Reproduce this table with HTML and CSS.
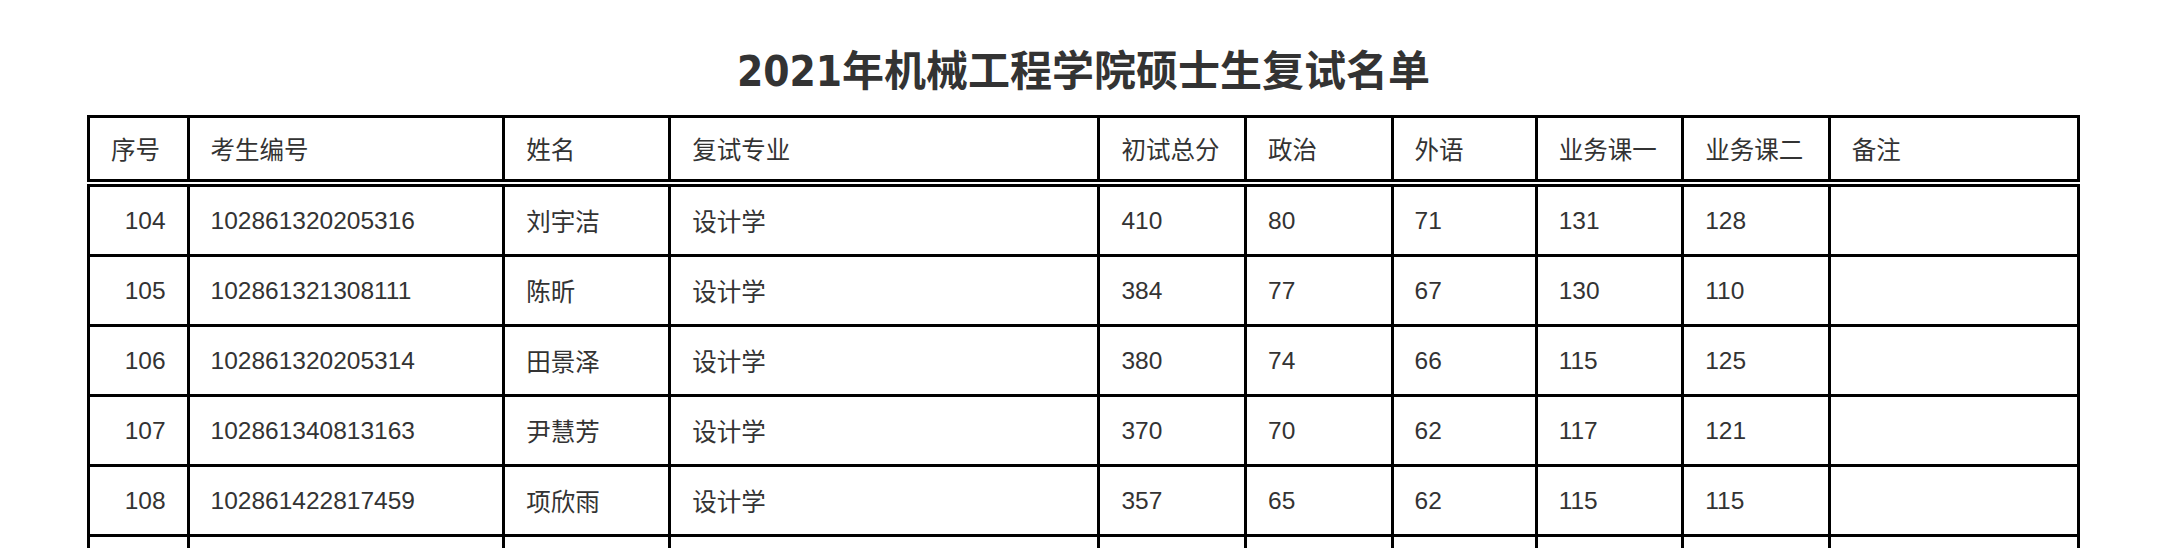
FILE: index.html
```html
<!DOCTYPE html>
<html lang="zh-CN">
<head>
<meta charset="utf-8">
<title>2021年机械工程学院硕士生复试名单</title>
<link rel="stylesheet" href="styles.css">
</head>
<body>
<div class="page">
  <h1 class="title">2021年机械工程学院硕士生复试名单</h1>
  <table class="roster">
    <colgroup>
      <col class="c-no">
      <col class="c-id">
      <col class="c-name">
      <col class="c-major">
      <col class="c-score">
      <col class="c-score">
      <col class="c-lang">
      <col class="c-score">
      <col class="c-score">
      <col class="c-note">
    </colgroup>
    <thead>
      <tr>
        <th>序号</th><th>考生编号</th><th>姓名</th><th>复试专业</th><th>初试总分</th><th>政治</th><th>外语</th><th>业务课一</th><th>业务课二</th><th>备注</th>
      </tr>
    </thead>
    <tbody>
      <tr><td class="num">104</td><td>102861320205316</td><td>刘宇洁</td><td>设计学</td><td>410</td><td>80</td><td>71</td><td>131</td><td>128</td><td></td></tr>
      <tr><td class="num">105</td><td>102861321308111</td><td>陈昕</td><td>设计学</td><td>384</td><td>77</td><td>67</td><td>130</td><td>110</td><td></td></tr>
      <tr><td class="num">106</td><td>102861320205314</td><td>田景泽</td><td>设计学</td><td>380</td><td>74</td><td>66</td><td>115</td><td>125</td><td></td></tr>
      <tr><td class="num">107</td><td>102861340813163</td><td>尹慧芳</td><td>设计学</td><td>370</td><td>70</td><td>62</td><td>117</td><td>121</td><td></td></tr>
      <tr><td class="num">108</td><td>102861422817459</td><td>项欣雨</td><td>设计学</td><td>357</td><td>65</td><td>62</td><td>115</td><td>115</td><td></td></tr>
      <tr><td class="num"></td><td></td><td></td><td></td><td></td><td></td><td></td><td></td><td></td><td></td></tr>
    </tbody>
  </table>
</div>
</body>
</html>
```
FILE: styles.css
```css
html, body {
  margin: 0;
  padding: 0;
  background: #ffffff;
}

.page {
  width: 1993px;
  margin-left: 87px;
  font-family: "Liberation Sans", "Noto Sans CJK SC", sans-serif;
  color: #333333;
}

.title {
  margin: 0;
  padding-top: 47px;
  height: 68px;
  line-height: 50px;
  font-family: "DejaVu Sans Condensed", "DejaVu Sans", "Noto Sans CJK SC", sans-serif;
  font-stretch: condensed;
  font-size: 42px;
  font-weight: bold;
  text-align: center;
  color: #333333;
}

.roster {
  width: 1993px;
  table-layout: fixed;
  border-collapse: collapse;
  font-size: 24.5px;
}

.c-no { width: 99.5px; }
.c-id { width: 315.5px; }
.c-name { width: 166px; }
.c-major { width: 429px; }
.c-score { width: 146.5px; }
.c-lang { width: 144px; }
.c-note { width: 249px; }

.roster th,
.roster td {
  border: 3px solid #000000;
  padding: 0 21px;
  text-align: left;
  vertical-align: middle;
  font-weight: normal;
  white-space: nowrap;
}

.roster thead tr {
  height: 66.5px;
}

.roster th {
  border-bottom: 8px double #000000;
}

.roster tbody tr {
  height: 70px;
}

.roster tbody tr:first-child {
  height: 72.5px;
}

.roster td.num {
  text-align: right;
}
```
